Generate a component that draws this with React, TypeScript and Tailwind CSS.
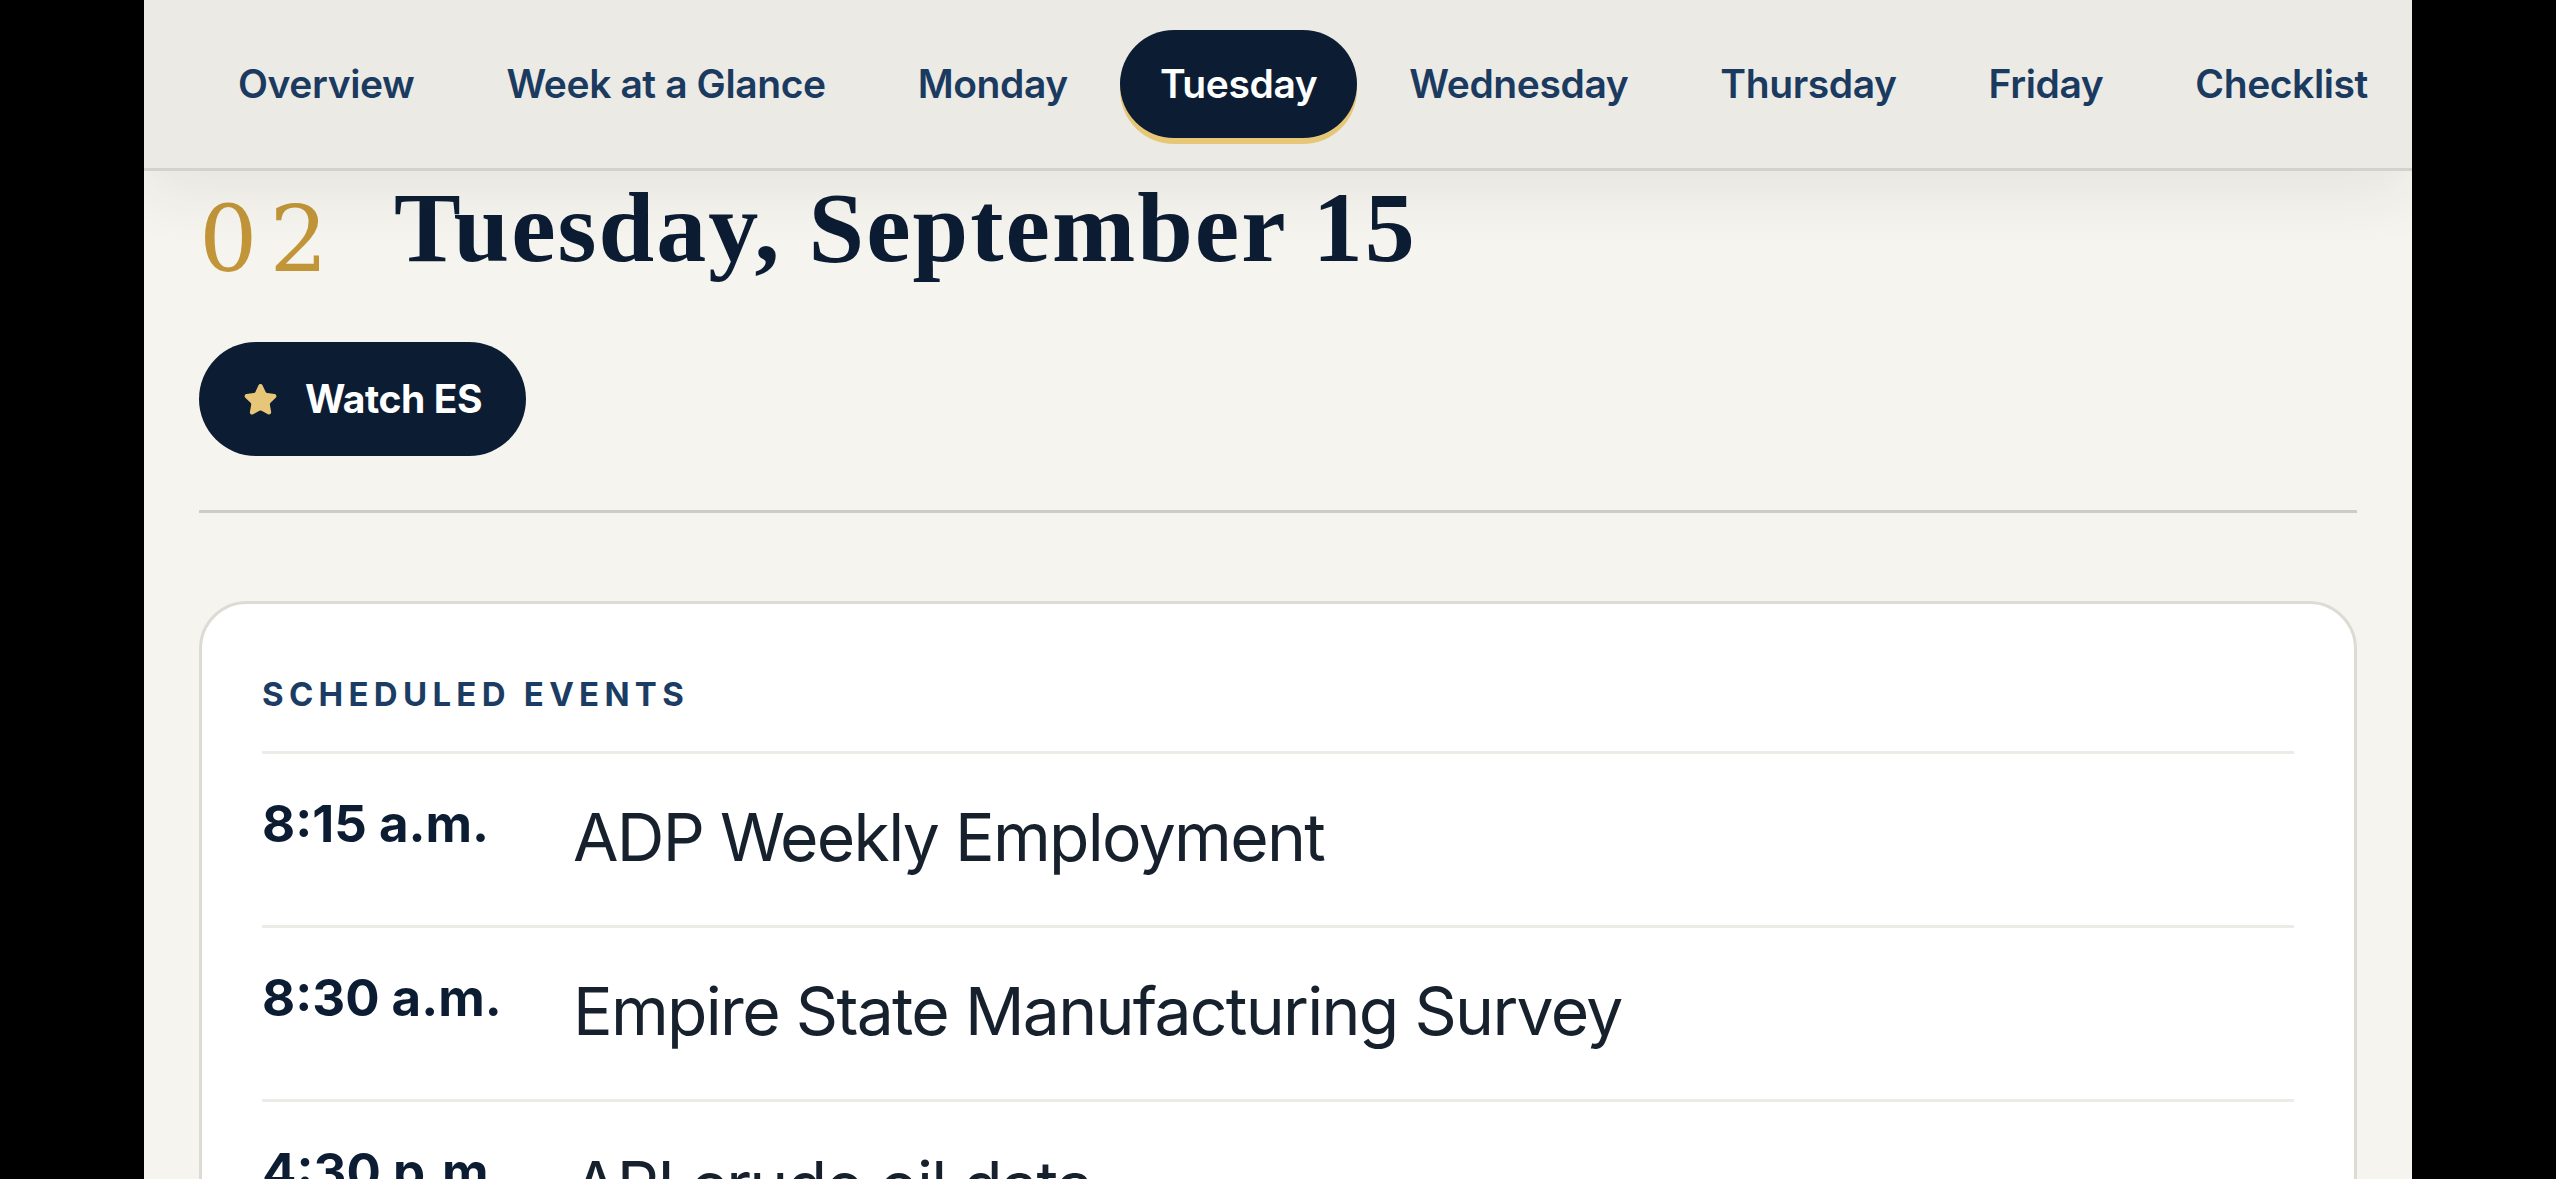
import React from 'react';

const tabs = ['Overview', 'Week at a Glance', 'Monday', 'Tuesday', 'Wednesday', 'Thursday', 'Friday', 'Checklist'];

const events = [
  { time: '8:15 a.m.', title: 'ADP Weekly Employment' },
  { time: '8:30 a.m.', title: 'Empire State Manufacturing Survey' },
  { time: '4:30 p.m.', title: 'API crude oil data' },
];

const sans = { fontFamily: 'Inter, "Noto Sans", "Liberation Sans", sans-serif' };
const serif = { fontFamily: '"Liberation Serif", "DejaVu Serif", serif' };
const numeral = { fontFamily: '"DejaVu Serif", "Liberation Serif", serif' };

const StarIcon: React.FC = () => (
  <svg width="35" height="33" viewBox="0 0 24 23" fill="#e8c677" aria-hidden="true">
    <path d="M10.6 1.6c.55-1.14 2.25-1.14 2.8 0l2.2 4.6c.22.46.66.78 1.17.85l5.03.7c1.26.18 1.76 1.7.84 2.57l-3.65 3.5c-.37.35-.54.87-.45 1.37l.9 5c.23 1.25-1.1 2.2-2.23 1.6l-4.47-2.4a1.5 1.5 0 0 0-1.43 0L6.84 21.8c-1.13.6-2.46-.35-2.23-1.6l.9-5c.09-.5-.08-1.02-.45-1.37L1.4 10.32c-.92-.87-.42-2.4.84-2.57l5.03-.7c.51-.07.95-.39 1.17-.85z" />
  </svg>
);

const App: React.FC = () => {
  return (
    <div className="min-h-screen bg-black" style={sans}>
      <div className="mx-auto w-[2268px] min-h-screen bg-[#f5f4ef] overflow-hidden">
        <nav className="relative z-10 h-[171px] bg-[#ebeae5] border-b-[3px] border-[#d2d3d0] shadow-[0_24px_60px_rgba(40,40,30,0.07)] flex items-center px-[54px] gap-[12px] whitespace-nowrap">
          {tabs.map((t) =>
            t === 'Tuesday' ? (
              <div
                key={t}
                className="h-[108px] px-[40px] rounded-full bg-[#0c1d33] text-white text-[39px] font-semibold tracking-[-0.4px] flex items-center shadow-[0_6px_0_#e6c677]"
              >
                {t}
              </div>
            ) : (
              <div key={t} className="h-[108px] px-[40px] rounded-full text-[#1b3a5f] text-[39px] font-semibold tracking-[-0.4px] flex items-center">
                {t}
              </div>
            )
          )}
        </nav>

        <main className="px-[55px] pt-[7px]">
          <div className="flex items-start h-[100px]">
            <span className="mt-[16px] text-[92px] leading-none text-[#c29539] tracking-[12px] mr-[54px]" style={numeral}>
              02
            </span>
            <h1 className="text-[100px] leading-none font-bold text-[#0c1d33] tracking-[2px]" style={serif}>
              Tuesday, September 15
            </h1>
          </div>

          <button className="mt-[64px] h-[114px] pl-[44px] pr-[44px] inline-flex items-center gap-[27px] rounded-full bg-[#0c1d33] text-white text-[39px] font-bold tracking-[-0.4px]">
            <StarIcon />
            <span>Watch ES</span>
          </button>

          <div className="mt-[54px] h-[3px] bg-[#cdcdc7]" />

          <section className="mt-[88px] bg-white border-[3px] border-[#dcdbd4] rounded-[48px] px-[60px] pt-[74px]">
            <h2 className="text-[33px] leading-[33px] font-bold uppercase tracking-[0.16em] text-[#1c3d63]">Scheduled Events</h2>
            <div className="mt-[40px]">
              {events.map((e) => (
                <div key={e.time} className="flex items-start border-t-[3px] border-[#ecebe6] pt-[39px] pb-[44px]">
                  <div className="w-[311px] shrink-0 text-[51px] leading-[61px] font-bold text-[#0c1d33]">{e.time}</div>
                  <div className="text-[66px] leading-[88px] text-[#17212d] tracking-[-1.7px]">{e.title}</div>
                </div>
              ))}
            </div>
          </section>
        </main>
      </div>
    </div>
  );
};

export default App;
